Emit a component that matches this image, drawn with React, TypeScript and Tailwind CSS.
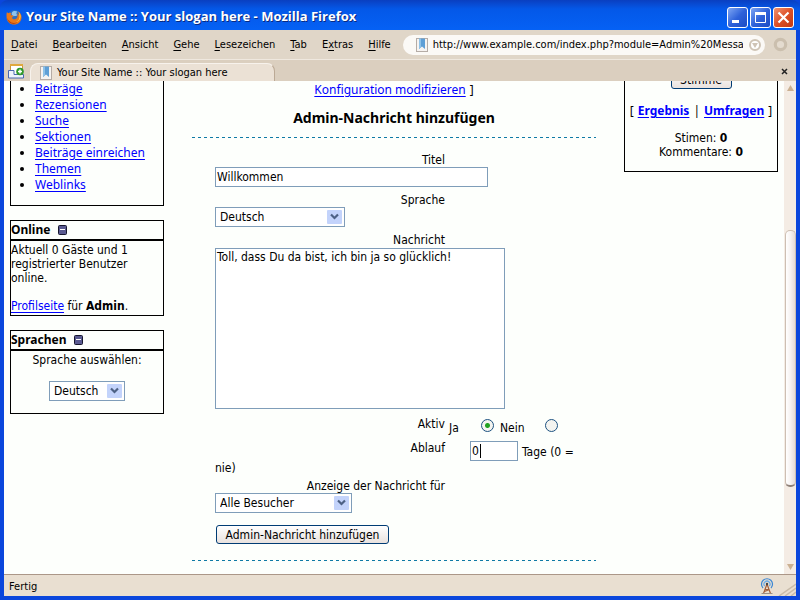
import React from "react";
import type { ReactNode } from "react";

const navLinks = ["Beiträge", "Rezensionen", "Suche", "Sektionen", "Beiträge einreichen", "Themen", "Weblinks"];

const menuItems = [
  ["", "D", "atei"],
  ["", "B", "earbeiten"],
  ["", "A", "nsicht"],
  ["", "G", "ehe"],
  ["", "L", "esezeichen"],
  ["", "T", "ab"],
  ["E", "x", "tras"],
  ["", "H", "ilfe"],
];

function FirefoxLogo() {
  return (
    <svg className="h-4 w-4 shrink-0" viewBox="0 0 16 16" aria-hidden="true">
      <circle cx="8.4" cy="7.6" r="6.6" fill="#2a6fc4" />
      <path d="M6 3.5c1-1.6 4-2 5.6-.4-1 .2-1.6 1-1 1.8.8 1 .2 2-.8 2.200-1-.2-2.400.4-3.200-.4C5.800 5.900 5.400 4.600 6 3.500z" fill="#8fc4ee" />
      <path d="M.7 3.500C1.500 3.300 2 3.700 2.500 4.200 3.500 3.300 5 3.700 5.500 4.300 4.600 4.900 4.500 5.600 5 6.300 6 6.500 7.200 6.200 7.600 7 7 7.900 5.700 7.900 6.200 9.200c1 1.700 4 1.600 5-.6.7-1.700.3-3.200-.2-4.200 1 .3 1.600 1 1.900 1.800.2-1.600-.4-3-1.300-4 2.600 1 4 3.500 3.900 6.200-.1 4-3.300 7.100-7.400 7.100C4 15.500.7 12.400.6 8.400.5 6.500.4 5 .7 3.500z" fill="#e8781a" />
      <path d="M12.400 2.800c2 1.700 2.700 4.400 1.800 6.800-.9 2.300-3 3.800-5.400 3.800 2.600-.6 4.400-2.300 4.700-4.900.2-2-.1-4-1.100-5.700z" fill="#ffd34a" />
      <path d="M1.200 8.800c.9 2.900 3.200 4.900 6.400 5.200 1.300.1 2.600-.2 3.700-.7-1.400 1.500-3.700 2-5.800 1.300C3 13.800 1.300 11.500 1.200 8.800z" fill="#b8420c" />
    </svg>
  );
}

function PageIcon() {
  return (
    <svg className="h-3.5 w-3.5 shrink-0" viewBox="0 0 14 14" aria-hidden="true">
      <rect x="1.500" y="0.500" width="11" height="13" fill="#f6f3f1" stroke="#b5aca6" />
      <path d="M4 0.500h6V11L7 8.500 4 11z" fill="#5e9fd6" />
      <path d="M4 0.500h2V9.300L4 11z" fill="#8fc2e8" />
    </svg>
  );
}

function CollapseIcon() {
  return (
    <svg className="h-2.5 w-[9px]" viewBox="0 0 9 10" aria-hidden="true">
      <rect x="0.500" y="0.500" width="8" height="9" rx="1" fill="#5a5a90" stroke="#16162e" />
      <path d="M2 4.500h5" stroke="#fff" />
    </svg>
  );
}

function TitleButton({ label, close, children }: { label: string; close?: boolean; children: ReactNode }) {
  return (
    <button
      type="button"
      aria-label={label}
      className={
        close
          ? "h-[21px] w-[21px] rounded-[3px] border border-white bg-linear-to-br from-[#f0926f] via-[#dd5027] to-[#c23a14]"
          : "h-[21px] w-[21px] rounded-[3px] border border-white bg-linear-to-br from-[#7fa5f3] via-[#2f62da] to-[#1c4cc4]"
      }
    >
      <svg className="h-[19px] w-[19px]" viewBox="0 0 19 19" fill="none" stroke="#fff" aria-hidden="true">
        {children}
      </svg>
    </button>
  );
}

function SelectBox({ id, value, width }: { id: string; value: string; width: string }) {
  return (
    <div className={`relative h-5 ${width}`}>
      <select
        id={id}
        className="block h-5 w-full appearance-none border border-[#7f9db9] bg-white pr-5 pl-1 text-xs leading-[18px]"
      >
        <option>{value}</option>
      </select>
      <svg className="pointer-events-none absolute top-[3px] right-[3px] h-3.5 w-[15px]" viewBox="0 0 15 14" aria-hidden="true">
        <rect width="15" height="14" rx="1" fill="#c3d3fb" />
        <path d="M4 4.500l3.500 3.500L11 4.500" fill="none" stroke="#4d6185" strokeWidth="2.200" />
      </svg>
    </div>
  );
}

function Block({ title, children }: { title: string; children: ReactNode }) {
  return (
    <section className="border border-black">
      <h2 className="flex h-5 items-center gap-2 border-b-2 border-black font-['Noto_Sans',sans-serif] text-xs font-bold">
        {title}
        <button type="button" aria-label={`${title} einklappen`}>
          <CollapseIcon />
        </button>
      </h2>
      {children}
    </section>
  );
}

function DashedRule() {
  return <div className="h-px w-full bg-[repeating-linear-gradient(90deg,#0f7aa5_0_3px,transparent_3px_6px)]" />;
}

function Link({ children, bold }: { children: ReactNode; bold?: boolean }) {
  return (
    <a href="#" className={bold ? "font-bold text-[#0000ff] underline underline-offset-2" : "text-[#0000ff] underline underline-offset-2"}>
      {children}
    </a>
  );
}

const fieldLabel = "block w-[230px] text-right";
const control = "border border-[#7f9db9] bg-white px-px text-xs outline-none";
const pushButton = "rounded-[3px] border border-[#003c74] bg-linear-to-b from-white to-[#e9e2de] text-xs";
const radio =
  "mt-0.5 h-[13px] w-[13px] appearance-none rounded-full border border-[#1d5281] bg-[#f4f4f0] checked:bg-[radial-gradient(circle,#21a121_0_2px,#f4f4f0_3px)]";

export default function App() {
  return (
    <div className="flex h-screen flex-col overflow-hidden bg-[#0a46dc] font-['DejaVu_Sans_Condensed','Noto_Sans',sans-serif] text-[11px] text-black">
      <header className="flex h-[30px] shrink-0 items-center rounded-t-lg bg-linear-to-b from-[#0a3fc0] via-[#0458e8] via-30% to-[#0561f5] pr-1.5 pl-1.5 pt-1">
        <FirefoxLogo />
        <h1 className="ml-1 flex-1 font-['Open_Sans','Noto_Sans',sans-serif] text-[13px] font-bold text-white [text-shadow:1px_1px_#0a2a80]">
          Your Site Name :: Your slogan here - Mozilla Firefox
        </h1>
        <div className="flex gap-0.5">
          <TitleButton label="Minimieren">
            <path d="M4 13.500h7" strokeWidth="3" />
          </TitleButton>
          <TitleButton label="Maximieren">
            <path d="M4.500 5v9.500h10V5" />
            <path d="M4 5.500h11" strokeWidth="3" />
          </TitleButton>
          <TitleButton label="Schließen" close>
            <path d="M4.500 4.500l10 10M14.500 4.500l-10 10" strokeWidth="2.200" />
          </TitleButton>
        </div>
      </header>

      <div className="flex min-h-0 flex-1 flex-col border-x-4 border-b-4 border-[#0a46dc]">
        <div className="flex h-[30px] shrink-0 items-center border-b border-[#efe8df] bg-[#e0d6c8] pr-2 pl-[7px]">
          <nav className="flex gap-[15px] pt-0.5">
            {menuItems.map(([before, key, after]) => (
              <button type="button" key={key + after}>
                {before}
                <span className="underline underline-offset-2">{key}</span>
                {after}
              </button>
            ))}
          </nav>
          <div className="ml-3 flex h-5 min-w-0 flex-1 items-center rounded-full bg-[#fbf9f6] pr-1 pl-3">
            <PageIcon />
            <input
              aria-label="Adresse"
              defaultValue="http://www.example.com/index.php?module=Admin%20Messages"
              className="ml-1 min-w-0 flex-1 bg-transparent pt-0.5 outline-none"
            />
            <button type="button" aria-label="Adressliste" className="ml-1.5">
              <svg className="h-3 w-3" viewBox="0 0 12 12" aria-hidden="true">
                <circle cx="6" cy="6" r="5" fill="#fff" stroke="#cfc4b6" strokeWidth="2" />
                <path d="M3 4h6L6 9z" fill="#cfc4b6" />
              </svg>
            </button>
          </div>
          <svg className="ml-2 h-[15px] w-[15px] shrink-0" viewBox="0 0 15 15" aria-hidden="true">
            <circle cx="7.500" cy="7.500" r="5.200" fill="#e4dbcf" stroke="#cbbfae" strokeWidth="3.200" />
          </svg>
        </div>

        <div className="flex h-[21px] shrink-0 items-end bg-[#dbcfbf] pr-2 pl-1">
          <button type="button" aria-label="Neuer Tab" className="mb-0.5">
            <svg className="h-4 w-4" viewBox="0 0 16 16" aria-hidden="true">
              <rect x="2.500" y="1.500" width="12" height="10" fill="#fff" stroke="#c9973c" />
              <path d="M2 2h13" stroke="#e0a93c" strokeWidth="2" />
              <path d="M.5 7.500v7.500h15V11.500H6V7.500z" fill="#eef3fb" stroke="#4a68b0" />
              <circle cx="12" cy="8.500" r="3.800" fill="#2f9a2c" />
              <path d="M12 6.500v4M10 8.500h4" stroke="#fff" strokeWidth="1.500" />
            </svg>
          </button>
          <div className="ml-1.5 flex h-[18px] w-[245px] items-center gap-1 rounded-t-lg border-t border-r border-l border-t-[#f7f2ec] border-r-[#bba995] border-l-[#f7f2ec] bg-[#ebe1d5] pl-2">
            <PageIcon />
            <span className="pt-0.5">Your Site Name :: Your slogan here</span>
          </div>
          <button type="button" aria-label="Tab schließen" className="mb-1.5 ml-auto">
            <svg className="h-[7px] w-[7px]" viewBox="0 0 7 7" aria-hidden="true">
              <path d="M1 1l5 5M6 1L1 6" stroke="#222" strokeWidth="1.500" />
            </svg>
          </button>
        </div>

        <div className="flex min-h-0 flex-1 overflow-hidden bg-[#fdfffc]">
          <div className="flex min-w-0 flex-1 items-start gap-7 px-1.5 text-xs leading-[14px]">
            <aside className="flex w-[154px] shrink-0 flex-col gap-3.5">
              <nav className="border border-t-0 border-black pb-3">
                <ul className="list-disc pl-6 font-['Noto_Sans',sans-serif] text-xs leading-4">
                  {navLinks.map((item) => (
                    <li key={item}>
                      <Link>{item}</Link>
                    </li>
                  ))}
                </ul>
              </nav>
              <Block title="Online">
                <p className="pt-0.5">
                  Aktuell 0 Gäste und 1<br />
                  registrierter Benutzer
                  <br />
                  online.
                </p>
                <p className="pt-3.5 pb-0.5">
                  <Link>Profilseite</Link> für <b>Admin</b>.
                </p>
              </Block>
              <Block title="Sprachen">
                <div className="flex flex-col items-center gap-3.5 pt-0.5 pb-3">
                  <label htmlFor="site-language">Sprache auswählen:</label>
                  <SelectBox id="site-language" value="Deutsch" width="w-[76px]" />
                </div>
              </Block>
            </aside>

            <main className="min-w-0 flex-1">
              <p className="flex justify-center gap-1 pt-0.5 font-['Noto_Sans',sans-serif]">
                <Link>Konfiguration modifizieren</Link>
                <span>]</span>
              </p>
              <h2 className="pt-3 pb-2.5 text-center font-['Noto_Sans',sans-serif] text-sm leading-[18px] font-bold">
                Admin-Nachricht hinzufügen
              </h2>
              <DashedRule />
              <form className="pt-[15px] pl-[23px]" onSubmit={(event) => event.preventDefault()}>
                <label htmlFor="title" className={fieldLabel}>
                  Titel
                </label>
                <input id="title" defaultValue="Willkommen" className={`block h-5 w-[273px] ${control}`} />
                <label htmlFor="language" className={`mt-1.5 ${fieldLabel}`}>
                  Sprache
                </label>
                <SelectBox id="language" value="Deutsch" width="w-[130px]" />
                <label htmlFor="message" className={`mt-1.5 ${fieldLabel}`}>
                  Nachricht
                </label>
                <textarea
                  id="message"
                  defaultValue="Toll, dass Du da bist, ich bin ja so glücklich!"
                  className={`mt-px block h-[161px] w-[290px] resize-none leading-4 ${control}`}
                />
                <div className="mt-2 flex h-5">
                  <span className={fieldLabel}>Aktiv</span>
                  <label htmlFor="active-yes" className="mt-1 ml-1 w-8">
                    Ja
                  </label>
                  <input id="active-yes" type="radio" name="active" defaultChecked className={radio} />
                  <label htmlFor="active-no" className="mt-1 ml-1.5 w-[45px]">
                    Nein
                  </label>
                  <input id="active-no" type="radio" name="active" className={radio} />
                </div>
                <div className="mt-1 flex">
                  <label htmlFor="expiry" className={fieldLabel}>
                    Ablauf
                  </label>
                  <div className="relative ml-[25px] h-5 w-12">
                    <input id="expiry" defaultValue="0" className={`block h-5 w-12 ${control}`} />
                    <span className="absolute top-[3px] left-2.5 h-3.5 w-px bg-black" />
                  </div>
                  <span className="mt-1 ml-1">Tage (0 =</span>
                </div>
                <p>nie)</p>
                <label htmlFor="audience" className={`mt-1 ${fieldLabel}`}>
                  Anzeige der Nachricht für
                </label>
                <SelectBox id="audience" value="Alle Besucher" width="w-[137px]" />
                <button type="submit" className={`mt-3 ml-px block h-[19px] w-[173px] whitespace-nowrap ${pushButton}`}>
                  Admin-Nachricht hinzufügen
                </button>
              </form>
              <div className="pt-4">
                <DashedRule />
              </div>
            </main>

            <aside className="flex w-[154px] shrink-0 flex-col border border-t-0 border-black pb-3 text-center">
              <div className="flex h-2 items-end justify-center">
                <button type="button" className={`h-[19px] w-[61px] shrink-0 ${pushButton}`}>
                  Stimme
                </button>
              </div>
              <p className="flex justify-center gap-1 pt-[15px] font-['Noto_Sans',sans-serif]">
                <span>[</span>
                <Link bold>Ergebnis</Link>
                <span>|</span>
                <Link bold>Umfragen</Link>
                <span>]</span>
              </p>
              <p className="pt-[13px]">
                Stimen: <b>0</b>
                <br />
                Kommentare: <b>0</b>
              </p>
            </aside>
          </div>

          <div className="flex w-3 shrink-0 flex-col items-center bg-[#f4ece4] py-1">
            <svg className="h-1.5 w-[7px]" viewBox="0 0 7 6" aria-hidden="true">
              <path d="M3.500 0L7 6H0z" fill="#cbb192" />
            </svg>
            <div className="flex-[140]" />
            <div className="w-[11px] flex-[255] rounded-[5px] border border-[#cdbfb2] border-b-2 border-b-[#8f8178] bg-linear-to-r from-white via-[#f6f2f0] to-[#e6dcd6]" />
            <div className="flex-[77]" />
            <svg className="h-1.5 w-[7px]" viewBox="0 0 7 6" aria-hidden="true">
              <path d="M3.500 6L7 0H0z" fill="#cbb192" />
            </svg>
          </div>
        </div>

        <footer className="flex h-[22px] shrink-0 items-center border-t border-[#ab9788] bg-[#e9dfd1] pl-[5px]">
          <span className="flex-1 pt-1">Fertig</span>
          <svg className="h-4 w-3.5" viewBox="0 0 14 16" fill="none" aria-hidden="true">
            <path d="M3 10A5.500 5.500 0 1 1 11 10" stroke="#3a86d4" strokeWidth="1.200" />
            <path d="M4.800 8.200a3 3 0 1 1 4.400 0" stroke="#69aae8" strokeWidth="1.200" />
            <path d="M7 6L3.500 15.500M7 6l3.500 9.500M5 11.500h4M4.500 13.500l5-2" stroke="#a5603c" strokeWidth="1.200" />
            <circle cx="7" cy="6" r="1.200" fill="#444" />
            <path d="M1.500 15.500h11" stroke="#9a8f86" />
          </svg>
          <svg className="ml-1 h-[21px] w-[18px]" viewBox="0 0 18 21" aria-hidden="true">
            <path d="M1 21L18 9M7 21L18 13M13 21l5-4" stroke="#c8bba9" strokeWidth="1.500" />
          </svg>
        </footer>
      </div>
    </div>
  );
}
